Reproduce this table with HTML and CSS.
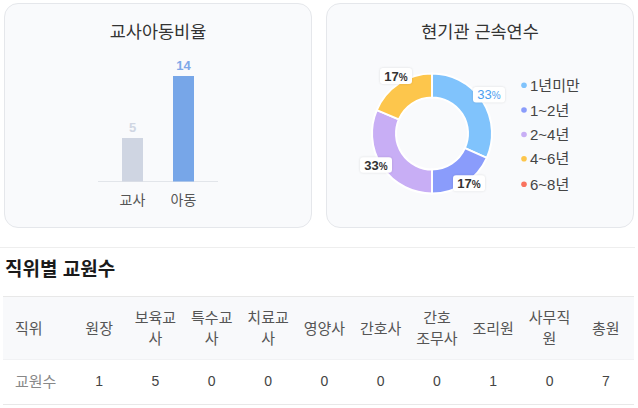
FILE: index.html
```html
<!DOCTYPE html>
<html lang="ko">
<head>
<meta charset="utf-8">
<title>교원 현황</title>
<link rel="stylesheet" href="styles.css">
</head>
<body>
<div class="charts">
  <section class="card">
    <h3 class="card-title">교사아동비율</h3>
    <svg class="chart" width="306" height="180" viewBox="0 0 306 180">
      <line x1="93" y1="137.5" x2="213" y2="137.5" class="axis"/>
      <rect x="117" y="94" width="21" height="43.5" class="bar-teacher"/>
      <rect x="168" y="32" width="21" height="105.5" class="bar-child"/>
      <text x="127.5" y="87.5" class="val val-teacher">5</text>
      <text x="178.5" y="26" class="val val-child">14</text>
      <text x="127.5" y="161" class="cat">교사</text>
      <text x="178.5" y="161" class="cat">아동</text>
    </svg>
  </section>
  <section class="card">
    <h3 class="card-title">현기관 근속연수</h3>
    <svg class="chart" width="306" height="180" viewBox="0 0 306 180">
      <path class="seg c1" d="M105,29.5 A60,60 0 0 1 159.81,113.9 L137.89,104.14 A36,36 0 0 0 105,53.5 Z"/>
      <path class="seg c2" d="M159.81,113.9 A60,60 0 0 1 105,149.5 L105,125.5 A36,36 0 0 0 137.89,104.14 Z"/>
      <path class="seg c3" d="M105,149.5 A60,60 0 0 1 49.77,66.06 L71.86,75.43 A36,36 0 0 0 105,125.5 Z"/>
      <path class="seg c4" d="M49.77,66.06 A60,60 0 0 1 105,29.5 L105,53.5 A36,36 0 0 0 71.86,75.43 Z"/>

      <rect class="lbox" x="53" y="24" width="32" height="16" rx="3"/>
      <text class="pct" x="69" y="36.6">17<tspan class="pct-sign">%</tspan></text>

      <rect class="lbox" x="146" y="43" width="32" height="15.5" rx="3"/>
      <text class="pct pct-blue" x="162" y="55.4">33<tspan class="pct-sign">%</tspan></text>

      <rect class="lbox" x="126" y="131.3" width="32" height="16" rx="3"/>
      <text class="pct" x="142" y="144">17<tspan class="pct-sign">%</tspan></text>

      <rect class="lbox" x="33" y="113.3" width="32" height="15.5" rx="3"/>
      <text class="pct" x="49" y="125.8">33<tspan class="pct-sign">%</tspan></text>

      <circle cx="197" cy="41.3" r="2.8" class="c1"/>
      <text x="203" y="46.8" class="leg">1년미만</text>
      <circle cx="197" cy="66" r="2.8" class="c2"/>
      <text x="203" y="71.5" class="leg">1~2년</text>
      <circle cx="197" cy="90.5" r="2.8" class="c3"/>
      <text x="203" y="96" class="leg">2~4년</text>
      <circle cx="197" cy="114.8" r="2.8" class="c4"/>
      <text x="203" y="120.3" class="leg">4~6년</text>
      <circle cx="197" cy="140.3" r="2.8" class="c5"/>
      <text x="203" y="145.8" class="leg">6~8년</text>
    </svg>
  </section>
</div>

<div class="divider"></div>

<h2 class="section-title">직위별 교원수</h2>

<table class="staff">
  <colgroup>
    <col class="col-first">
    <col><col><col><col><col><col><col><col><col><col>
  </colgroup>
  <thead>
    <tr>
      <th class="first">직위</th>
      <th>원장</th>
      <th>보육교<br>사</th>
      <th>특수교<br>사</th>
      <th>치료교<br>사</th>
      <th>영양사</th>
      <th>간호사</th>
      <th>간호<br>조무사</th>
      <th>조리원</th>
      <th>사무직<br>원</th>
      <th>총원</th>
    </tr>
  </thead>
  <tbody>
    <tr>
      <td class="first">교원수</td>
      <td>1</td>
      <td>5</td>
      <td>0</td>
      <td>0</td>
      <td>0</td>
      <td>0</td>
      <td>0</td>
      <td>1</td>
      <td>0</td>
      <td>7</td>
    </tr>
  </tbody>
</table>
</body>
</html>
```

FILE: styles.css
```css
* {
  box-sizing: border-box;
}

body {
  margin: 0;
  background: #ffffff;
  font-family: "Liberation Sans", "Noto Sans CJK KR", sans-serif;
  color: #333333;
}

.charts {
  display: flex;
  gap: 14px;
  padding: 3px 4px 0 4px;
}

.card {
  flex: 1 1 0;
  height: 225px;
  background: #f9fafc;
  border: 1px solid #e5e7eb;
  border-radius: 14px;
  padding-top: 16px;
  overflow: hidden;
}

.card-title {
  margin: 0;
  font-size: 17.5px;
  line-height: 24px;
  font-weight: normal;
  text-align: center;
  color: #333333;
}

.chart {
  display: block;
  font-family: "Liberation Sans", "Noto Sans CJK KR", sans-serif;
}

.axis {
  stroke: #e2e5ea;
  stroke-width: 1;
}

.bar-teacher {
  fill: #cfd5e2;
}

.bar-child {
  fill: #77a6e8;
}

.val {
  font-size: 13px;
  font-weight: bold;
  text-anchor: middle;
}

.val-teacher {
  fill: #d0d6e3;
}

.val-child {
  fill: #7ea8e8;
}

.cat {
  font-size: 14px;
  text-anchor: middle;
  fill: #555555;
}

.seg {
  stroke: #ffffff;
  stroke-width: 2;
  stroke-linejoin: miter;
}

.c1 { fill: #80c3fc; }
.c2 { fill: #8a9cfb; }
.c3 { fill: #c8aef5; }
.c4 { fill: #fdc64c; }
.c5 { fill: #f9735f; }

.lbox {
  fill: #ffffff;
  filter: drop-shadow(0 0 1px rgba(0, 0, 0, 0.12));
}

.pct {
  font-size: 13px;
  font-weight: bold;
  text-anchor: middle;
  fill: #333333;
}

.pct-blue {
  font-weight: normal;
  fill: #4b9ef0;
}

.pct-sign {
  font-size: 10px;
}

.leg {
  font-size: 15px;
  fill: #444444;
}

.divider {
  margin: 19px 3px 0 0;
  height: 1px;
  background: #eeeeee;
}

.section-title {
  margin: 10px 0 0 5px;
  font-size: 19px;
  line-height: 24px;
  font-weight: bold;
  color: #1a1a1a;
}

.staff {
  margin: 14px 4px 0 3px;
  width: 631px;
  table-layout: fixed;
  border-collapse: collapse;
  border-top: 1px solid #e8e8e8;
  font-size: 15px;
  line-height: 21px;
}

.col-first {
  width: 68px;
}

.staff thead tr {
  background: #f8f9fb;
}

.staff th {
  font-weight: normal;
  color: #555555;
  padding: 10px 4px;
  text-align: center;
  vertical-align: middle;
  white-space: nowrap;
  border-bottom: 1px solid #f1f2f4;
}

.staff td {
  color: #444444;
  font-size: 14px;
  padding: 11px 4px 12px 4px;
  text-align: center;
  border-bottom: 1px solid #e8e8e8;
}

.staff .first {
  text-align: left;
  padding-left: 12px;
}

.staff td.first {
  color: #888888;
  font-size: 15px;
}
```
